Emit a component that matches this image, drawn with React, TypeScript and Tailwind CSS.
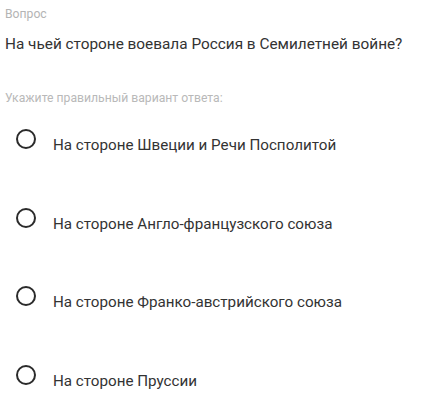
const options = [
  'На стороне Швеции и Речи Посполитой',
  'На стороне Англо-французского союза',
  'На стороне Франко-австрийского союза',
  'На стороне Пруссии',
]

export default function App() {
  return (
    <div className="h-[410px] w-[422px] bg-white font-['Roboto',sans-serif]">
      <div className="px-[5px] pt-[7px]">
        <div className="text-[12.2px] leading-[14px] text-[#b4b4b4]">Вопрос</div>
        <div className="mt-[14px] text-[15.35px] leading-[18px] text-[#333]">
          На чьей стороне воевала Россия в Семилетней войне?
        </div>
        <div className="mt-[38px] text-[12.2px] leading-[14px] text-[#b9b9b9]">
          Укажите правильный вариант ответа:
        </div>
      </div>
      <div className="mt-[24px] flex flex-col gap-[58.7px] pl-[16px]">
        {options.map((o) => (
          <div key={o} className="flex h-[20px] items-center">
            <span className="h-[20px] w-[20px] flex-none rounded-full border-[2.5px] border-[#2b2b2b]" />
            <span className="ml-[17px] mt-[12px] text-[15.2px] leading-[18px] text-[#333]">{o}</span>
          </div>
        ))}
      </div>
    </div>
  )
}
